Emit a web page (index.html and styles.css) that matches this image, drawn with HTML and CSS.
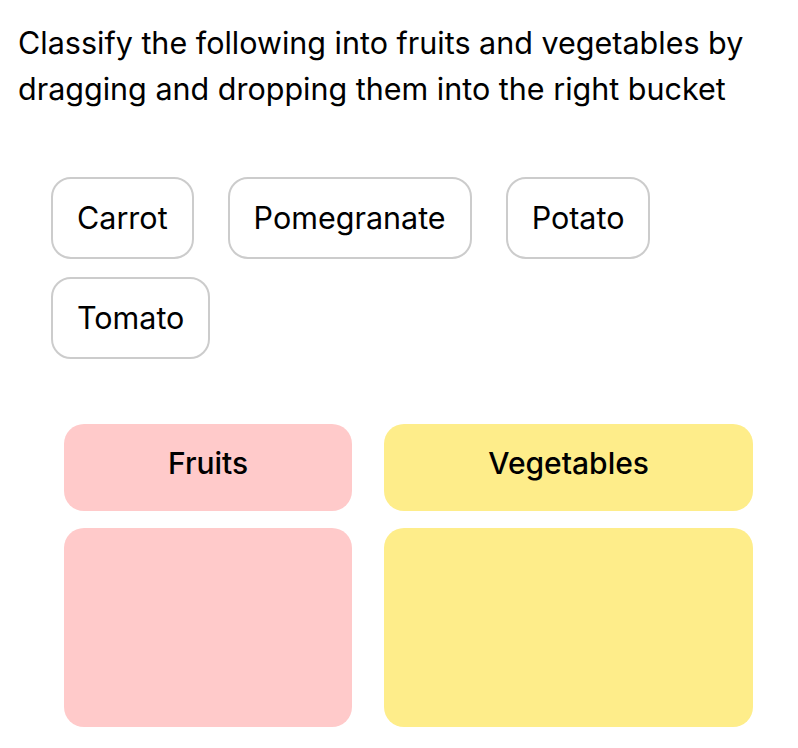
FILE: index.html
```html
<!DOCTYPE html>
<html>
<head>
<meta charset="utf-8">
<link rel="stylesheet" href="styles.css">
</head>
<body>
<p class="title">Classify the following into fruits and vegetables by dragging and dropping them into the right bucket</p>
<div class="chips">
  <div class="chip">Carrot</div>
  <div class="chip">Pomegranate</div>
  <div class="chip">Potato</div>
  <div class="chip">Tomato</div>
</div>
<div class="buckets">
  <div class="bucket fruits">
    <div class="bucket-head">Fruits</div>
    <div class="bucket-body"></div>
  </div>
  <div class="bucket veg">
    <div class="bucket-head">Vegetables</div>
    <div class="bucket-body"></div>
  </div>
</div>
</body>
</html>
```
FILE: styles.css
```css
html, body {
  margin: 0;
  padding: 0;
  background: #fff;
}
body {
  font-family: Inter, "Noto Sans", sans-serif;
  color: #000;
}
.title {
  margin: 0;
  padding: 20px 0 0 18px;
  font-size: 30.5px;
  line-height: 46px;
  width: 760px;
}
.chips {
  display: flex;
  flex-wrap: wrap;
  column-gap: 34px;
  row-gap: 18px;
  margin: 65px 0 0 51px;
  width: 640px;
}
.chip {
  border: 2px solid #cccccc;
  border-radius: 20px;
  padding: 0 24px;
  height: 78px;
  line-height: 78px;
  font-size: 30.5px;
}
.buckets {
  display: flex;
  gap: 32px;
  margin: 65px 45px 0 64px;
}
.bucket {
  flex: 1 1 auto;
  display: flex;
  flex-direction: column;
  gap: 17px;
}
.bucket-head {
  height: 67px;
  padding-top: 20px;
  line-height: 38px;
  text-align: center;
  font-size: 30px;
  font-weight: 500;
  border-radius: 20px;
}
.bucket-body {
  height: 199px;
  border-radius: 20px;
}
.fruits .bucket-head, .fruits .bucket-body { background: #ffcaca; }
.veg .bucket-head, .veg .bucket-body { background: #feed8a; }
```
